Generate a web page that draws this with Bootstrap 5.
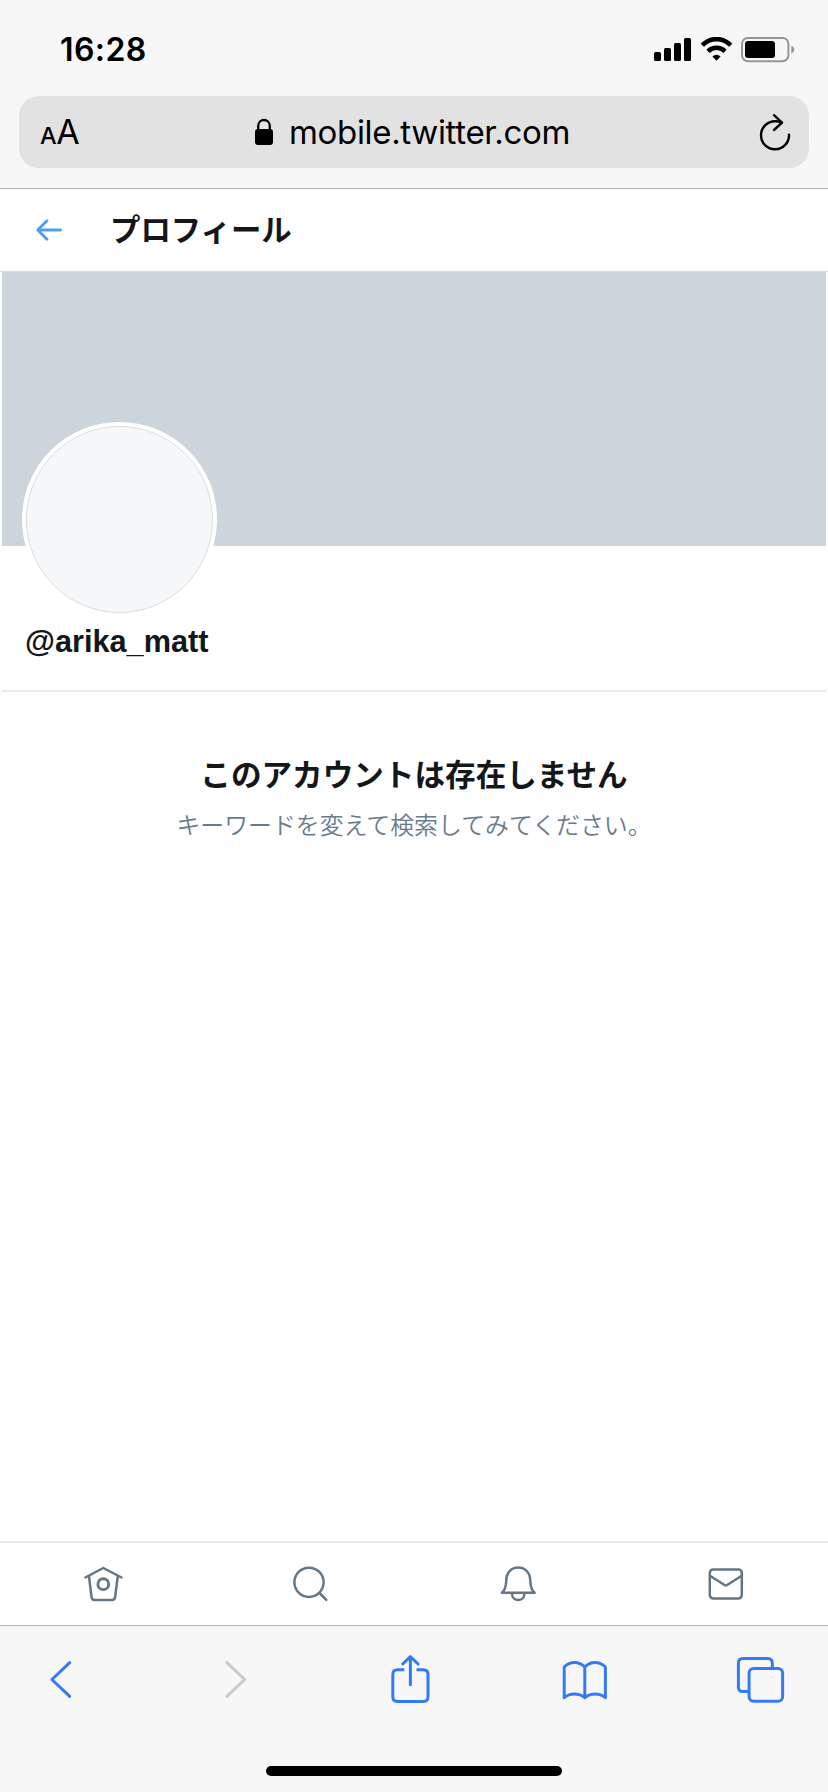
<!DOCTYPE html>
<html lang="ja">
<head>
<meta charset="utf-8">
<meta name="viewport" content="width=device-width, initial-scale=1">
<title>プロフィール</title>
<link href="https://cdn.jsdelivr.net/npm/bootstrap@5.3.0/dist/css/bootstrap.min.css" rel="stylesheet">
<style>
  body { font-family: "Liberation Sans", "Noto Sans CJK JP", sans-serif; color: #14171a; }
  svg { display: block; flex: none; fill: none; stroke-linecap: round; stroke-linejoin: round; }
  .screen { height: 1792px; }
  .chrome { background: #f7f7f7; color: #000; font-family: Inter, sans-serif; }
  .top-chrome { height: 189px; border-bottom: 1px solid #b2b2b2; }
  .status { height: 96px; padding: 3px 33px 0 60px; }
  .clock { font-size: 32px; font-weight: 600; line-height: 1; letter-spacing: .4px; }
  .address { height: 72px; margin: 0 19px; padding: 0 16px 0 21px; border-radius: 20px; background: #e2e2e2; }
  .text-size { width: 60px; line-height: 40px; padding-top: 4px; font-size: 34px; letter-spacing: -.5px; }
  .text-size small { font-size: 23.5px; font-weight: 500; }
  .lock { margin-left: 155px; }
  .host { font-size: 33px; line-height: 40px; letter-spacing: -.33px; }
  .page-head { height: 83px; padding: 0 34px; border-bottom: 1px solid #d9dbdd; }
  .page-head h1 { font-size: 30.4px; font-weight: 700; line-height: 40px; margin-left: 44px; }
  .profile { margin: 0 2px; height: 420px; border-bottom: 2px solid #e6ecf0; }
  .banner { height: 274px; background: #ccd4dc; }
  .avatar { width: 195px; height: 195px; margin: -124.500px 0 0 20px; border: 4px solid #fff; background: #fff; }
  .avatar-face { background: #f5f7f9; border: 1px solid #dadee2; }
  .handle { font-size: 30.7px; font-weight: 700; line-height: 40px; margin: 5.500px 0 0 23px; }
  .empty-title { font-size: 30.6px; font-weight: 700; line-height: 44px; margin-top: 61px; }
  .empty-hint { font-size: 23.9px; font-weight: 350; line-height: 36px; color: #697b8c; margin-top: 11px; }
  .tabs-row { height: 85px; border-top: 2px solid #e6ecf0; border-bottom: 1px solid #b2b2b2; }
  .tabs-row svg { stroke: #657786; stroke-width: 2.5; }
  .bottom-chrome { height: 166px; padding: 24px 38px 0 31px; }
  .bottom-chrome svg { stroke: #337bf6; stroke-width: 3; }
  .bottom-chrome .off { stroke: #cacaca; }
  .home-bar { width: 296px; height: 10px; margin: 56px 0 0 235px; background: #000; }
</style>
</head>
<body>
<div class="screen d-flex flex-column bg-white overflow-hidden">
  <header class="chrome top-chrome flex-shrink-0">
    <div class="status d-flex align-items-center">
      <div class="clock me-auto">16:28</div>
      <svg width="37" height="26" viewBox="0 0 37 26"><g fill="#000"><rect y="15" width="7" height="9" rx="1.6"/><rect x="10" y="11" width="7" height="13" rx="1.6"/><rect x="20" y="6" width="7" height="18" rx="1.6"/><rect x="30" y="1" width="7" height="23" rx="1.6"/></g></svg>
      <svg class="ms-2" width="34" height="26" viewBox="0 0 34 26"><g stroke="#000" stroke-width="4.6" stroke-linecap="butt"><path d="M3.3 8.3a19.4 19.4 0 0 1 28.4 0"/><path d="M9 14.3a12 12 0 0 1 17 0"/></g><path d="M13.4 19.4q4.1-3.4 8.2 0l-4.1 4.4z" fill="#000"/></svg>
      <svg class="ms-2" width="54" height="26" viewBox="0 0 54 26"><rect x="1" y=".9" width="46.4" height="23.4" rx="6" stroke="#969696" stroke-width="2"/><rect x="4" y="4" width="30" height="17" rx="3" fill="#000"/><path d="M50.3 8.7q3 1.2 3 3.9t-3 3.9z" fill="#969696"/></svg>
    </div>
    <div class="address d-flex align-items-center">
      <div class="text-size"><small>A</small>A</div>
      <svg class="lock" width="18" height="28" viewBox="0 0 18 28"><rect y="11" width="18" height="16" rx="3" fill="#000"/><path d="M3.2 13V8c0-8 11.6-8 11.6 0v5" stroke="#000" stroke-width="2.3"/></svg>
      <div class="host ms-3">mobile.twitter.com</div>
      <svg class="ms-auto" width="36" height="44" viewBox="0 0 36 44"><g stroke="#000" stroke-width="2.4"><path d="M24.8 12.6Q21.5 11.3 18 11.3A14 14 0 1 0 32 24.8"/><path d="M17 5.2l8 7.4-8 7.4"/></g></svg>
    </div>
  </header>

  <main class="flex-grow-1">
    <div class="page-head d-flex align-items-center">
      <svg width="32" height="26" viewBox="0 0 32 26"><path d="M26.7 13H4M13 3.7L3.7 13l9.3 9.3" stroke="#4a9fee" stroke-width="2.8"/></svg>
      <h1 class="mb-0">プロフィール</h1>
    </div>
    <section class="profile">
      <div class="banner"></div>
      <div class="avatar rounded-circle position-relative"><div class="avatar-face rounded-circle w-100 h-100"></div></div>
      <div class="handle">@arika_matt</div>
    </section>
    <section class="text-center">
      <h2 class="empty-title mb-0">このアカウントは存在しません</h2>
      <p class="empty-hint mb-0">キーワードを変えて検索してみてください。</p>
    </section>
  </main>

  <nav class="tabs-row row g-0 flex-shrink-0 align-items-center">
    <a class="col d-flex justify-content-center" href="#" aria-label="ホーム"><svg width="48" height="48" viewBox="0 0 48 48"><path d="M5.3 17.5L23.3 8l18.2 9.5M9 16l2.5 21q.4 3 3 3h17.6q2.6 0 3-3L37.8 16"/><circle cx="23.3" cy="24.2" r="5.4" stroke-width="2.9"/></svg></a>
    <a class="col d-flex justify-content-center" href="#" aria-label="検索"><svg width="48" height="48" viewBox="0 0 48 48"><circle cx="22" cy="22.3" r="14.6"/><path d="M32.5 33l6.8 6.8"/></svg></a>
    <a class="col d-flex justify-content-center" href="#" aria-label="通知"><svg width="48" height="48" viewBox="0 0 48 48"><path d="M7.9 32.8H40.6Q36.6 29.5 36.3 21C36.3 12.5 31 7.6 24.2 7.6S12.2 12.5 12.2 21Q11.9 29.5 7.9 32.8ZM18 33.5c0 8.8 12.4 8.8 12.4 0"/></svg></a>
    <a class="col d-flex justify-content-center" href="#" aria-label="メッセージ"><svg width="48" height="48" viewBox="0 0 48 48"><rect x="8.8" y="9.5" width="32" height="29" rx="3.4"/><path d="M9.3 16l14.2 9q1.3.8 2.6 0L40.3 16"/></svg></a>
  </nav>

  <footer class="chrome bottom-chrome flex-shrink-0">
    <div class="d-flex justify-content-between">
      <svg width="60" height="60" viewBox="0 0 60 60"><path d="M38.7 12.7L20.9 29.5l17.8 16.8"/></svg>
      <svg class="off" width="60" height="60" viewBox="0 0 60 60"><path d="M20.9 12.7l17.8 16.8-17.8 16.8"/></svg>
      <svg width="60" height="60" viewBox="0 0 60 60"><path stroke-linecap="butt" d="M23.3 19.8H16.5q-4.7 0-4.7 4.7V46.7q0 4.7 4.7 4.7H42.3q4.7 0 4.7-4.7V24.5q0-4.7-4.7-4.7H35.5"/><path d="M29.4 34.8V7M21.7 14L29.4 6.6 37.1 14"/></svg>
      <svg width="60" height="60" viewBox="0 0 60 60"><path d="M29.8 17Q25.3 12.6 19.5 12.6T9.2 17V47.7Q13.7 44.1 19.5 44.1T29.8 47.7Q34.3 44.1 40.1 44.1T50.4 47.7V17Q45.9 12.6 40.1 12.6T29.8 17V47.7"/></svg>
      <svg width="60" height="60" viewBox="0 0 60 60"><path d="M19 41.5H13q-4.6 0-4.6-4.6V13q0-4.6 4.6-4.6H37.7q4.6 0 4.6 4.6V18.5" stroke-linecap="butt"/><rect x="19.1" y="18.4" width="33.5" height="32.9" rx="4.5"/></svg>
    </div>
    <div class="home-bar rounded-pill"></div>
  </footer>
</div>
<script src="https://cdn.jsdelivr.net/npm/bootstrap@5.3.0/dist/js/bootstrap.bundle.min.js"></script>
</body>
</html>
